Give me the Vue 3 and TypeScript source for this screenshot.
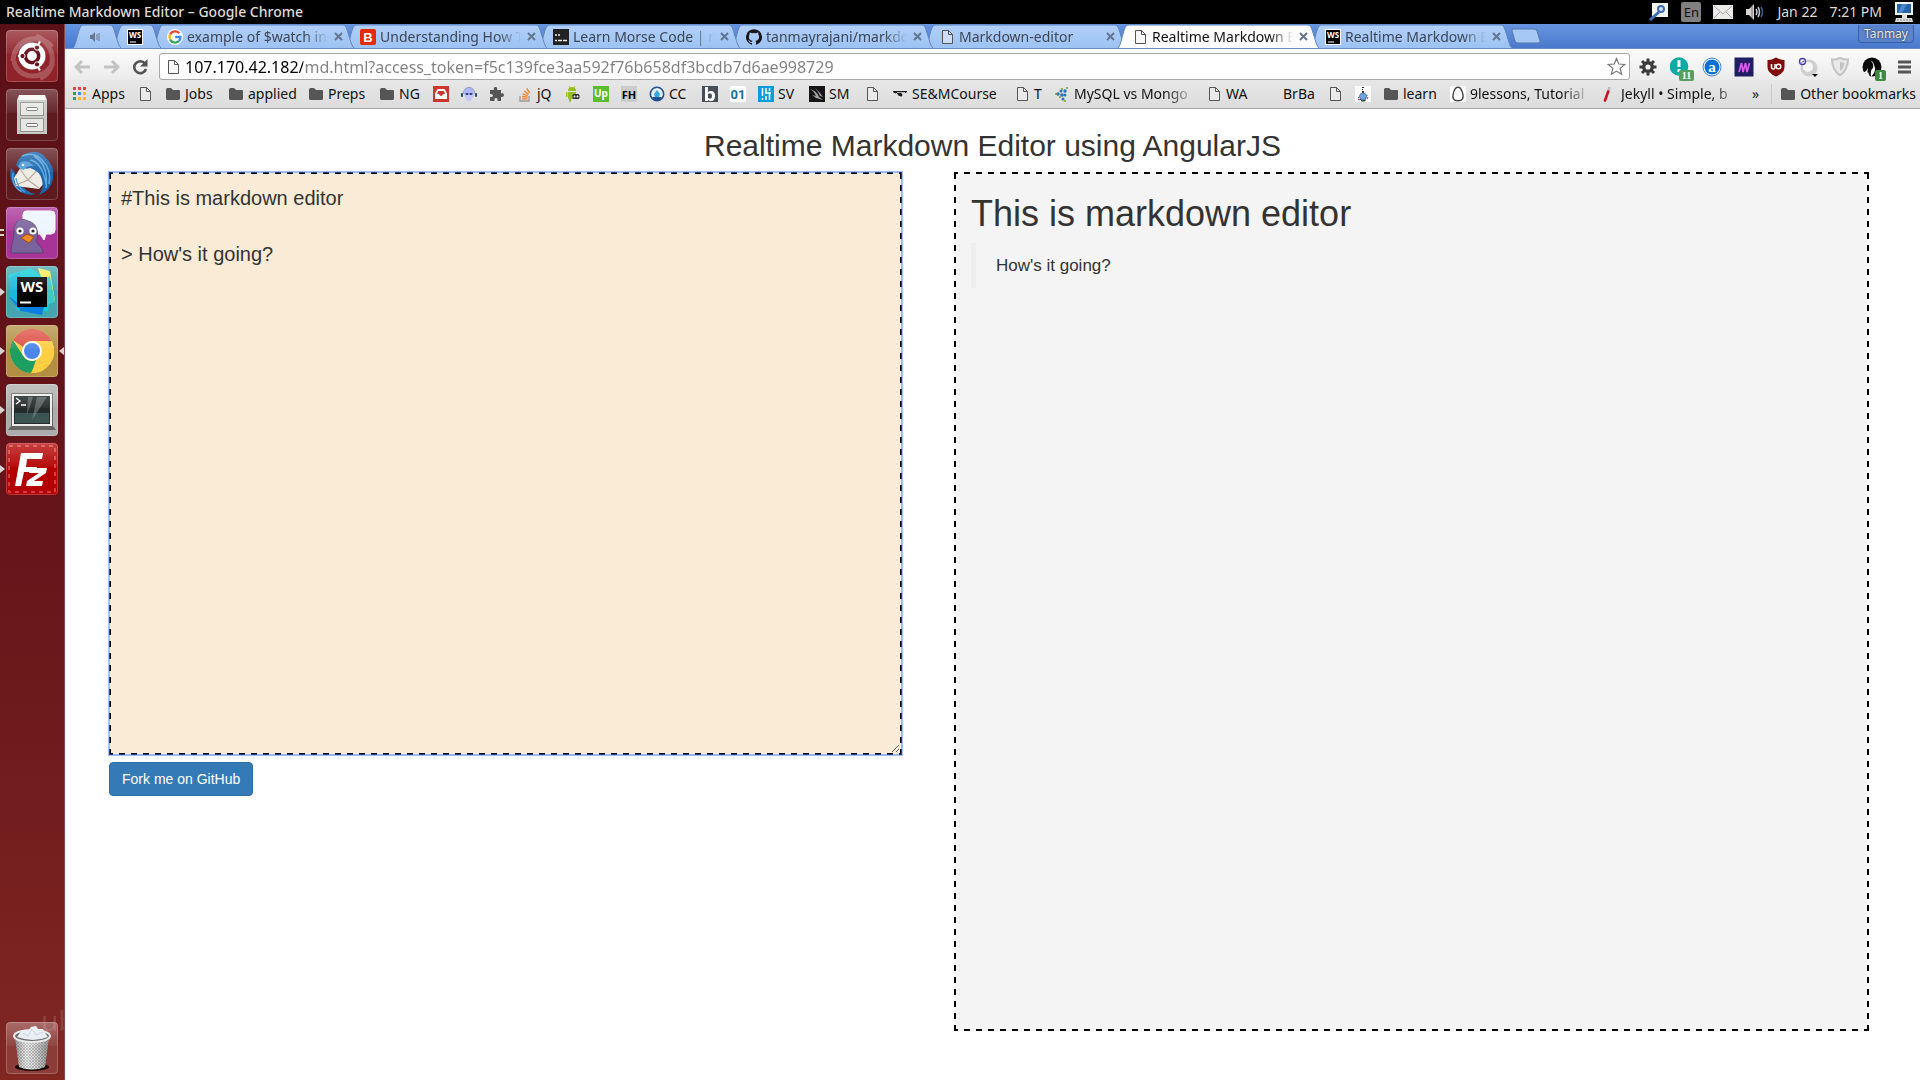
<script setup lang="ts">
import { computed, ref } from 'vue'

interface Tab {
  title: string
  icon: string
  pinned?: boolean
  active?: boolean
}
interface Bookmark {
  icon: string
  label?: string
  width?: number
  fade?: boolean
  name?: string
}
interface App {
  name: string
  icon: string
  tile: string
  running?: 'one' | 'two'
  focused?: boolean
}
interface Block {
  kind: 'h1' | 'quote' | 'p'
  text: string
}

const PINNED_WIDTH = 40
const TAB_WIDTH = 193

const tabs: Tab[] = [
  { title: 'Audio', icon: 'speaker', pinned: true },
  { title: 'WebStorm', icon: 'ws', pinned: true },
  { title: 'example of $watch in', icon: 'google' },
  { title: 'Understanding How T', icon: 'bRed' },
  { title: 'Learn Morse Code | m', icon: 'morse' },
  { title: 'tanmayrajani/markdo', icon: 'github' },
  { title: 'Markdown-editor', icon: 'page' },
  { title: 'Realtime Markdown E', icon: 'page', active: true },
  { title: 'Realtime Markdown E', icon: 'ws' },
]

const tabWidth = (t: Tab) => (t.pinned ? PINNED_WIDTH : TAB_WIDTH)
const tabLayer = (t: Tab, i: number) => (t.active ? tabs.length + 1 : tabs.length - i)
const tabPath = (t: Tab) => {
  const w = tabWidth(t) + 8
  return `M0 24C3 22 5 6 8 2Q9 1 11 1H${w - 11}Q${w - 9} 1 ${w - 8} 3C${w - 5} 10 ${w - 3} 22 ${w} 24`
}

const bookmarks: Bookmark[] = [
  { icon: 'apps', label: 'Apps', width: 33 },
  { icon: 'page', name: 'Page' },
  { icon: 'folder', label: 'Jobs', width: 31 },
  { icon: 'folder', label: 'applied', width: 48 },
  { icon: 'folder', label: 'Preps', width: 39 },
  { icon: 'folder', label: 'NG', width: 22 },
  { icon: 'inbox', name: 'Inbox' },
  { icon: 'alien', name: 'Music' },
  { icon: 'puzzle', name: 'Extensions' },
  { icon: 'stack', label: 'jQ', width: 16 },
  { icon: 'android', name: 'Android' },
  { icon: 'upwork', name: 'Upwork' },
  { icon: 'fh', name: 'FH' },
  { icon: 'cc', label: 'CC', width: 21 },
  { icon: 'bGrey', name: 'B' },
  { icon: 'zeroOne', name: '01' },
  { icon: 'sv', label: 'SV', width: 19 },
  { icon: 'sm', label: 'SM', width: 23 },
  { icon: 'page', name: 'Page' },
  { icon: 'se', label: 'SE&MCourse', width: 90 },
  { icon: 'page', label: 'T', width: 8 },
  { icon: 'mysql', label: 'MySQL vs Mongo', width: 120, fade: true },
  { icon: 'page', label: 'WA', width: 25 },
  { icon: 'blank', label: 'BrBa', width: 32 },
  { icon: 'page', name: 'Page' },
  { icon: 'flask', name: 'Flask' },
  { icon: 'folder', label: 'learn', width: 35 },
  { icon: 'egg', label: '9lessons, Tutorial', width: 119, fade: true },
  { icon: 'tube', label: 'Jekyll • Simple, b', width: 119, fade: true },
]

const extensions = [
  { name: 'Settings', icon: 'gear' },
  { name: 'Alerts', icon: 'alert', badge: '11' },
  { name: 'Alexa', icon: 'alexa' },
  { name: 'Momentum', icon: 'momentum' },
  { name: 'uBlock', icon: 'ublock' },
  { name: 'Search', icon: 'orb' },
  { name: 'Shield', icon: 'shield' },
  { name: 'Umbrella', icon: 'swan', badge: '1' },
]

const apps: App[] = [
  { name: 'Dash', icon: 'ubuntu', tile: 'dash' },
  { name: 'Files', icon: 'files', tile: 'glass' },
  { name: 'Thunderbird', icon: 'thunderbird', tile: 'glass' },
  { name: 'Pidgin', icon: 'pidgin', tile: 'purple', running: 'two' },
  { name: 'WebStorm', icon: 'webstorm', tile: 'teal', running: 'one' },
  { name: 'Google Chrome', icon: 'chrome', tile: 'gold', running: 'one', focused: true },
  { name: 'Terminal', icon: 'terminal', tile: 'silver', running: 'one' },
  { name: 'FileZilla', icon: 'filezilla', tile: 'red', running: 'one' },
]

const icons: Record<string, string> = {
  blank: '',
  speaker: '<g fill="#66778f"><path d="M3 6h2l3-3v10l-3-3H3z"/><path d="M10 5v6M12 4v8" stroke="#66778f" stroke-width="1"/></g>',
  ws: '<rect width="16" height="16" fill="#fff"/><rect x="1" y="1" width="14" height="14" fill="#000"/><text x="8" y="9" font-size="8" font-weight="700" fill="#fff" text-anchor="middle" font-family="Open Sans,sans-serif">WS</text><path d="M3 13h6" stroke="#fff"/>',
  google: '<circle cx="8" cy="8" r="8" fill="#fff"/><g fill="none" stroke-width="2.3"><path d="M12.2 4.2A5.6 5.6 0 0 0 3.1 5.4" stroke="#ea4335"/><path d="M3.1 5.4a5.6 5.6 0 0 0 0 5.2" stroke="#fbbc05"/><path d="M3.1 10.6a5.6 5.6 0 0 0 8.7 1.5" stroke="#34a853"/><path d="M11.8 12.1A5.5 5.5 0 0 0 13.5 8H8.2" stroke="#4285f4"/></g>',
  bRed: '<rect width="16" height="16" rx="2" fill="#e62b00"/><text x="8" y="13" font-size="13" font-weight="700" fill="#fff" text-anchor="middle" font-family="Liberation Sans,sans-serif">B</text>',
  morse: '<rect width="16" height="16" fill="#222"/><path d="M2 6h2M5 6h2M2 11.500h2M5 11.500h4M10 11.500h4" stroke="#eee" stroke-width="1.500"/>',
  github: '<path fill="#191717" d="M8 .2a8 8 0 0 0-2.500 15.600c.4.100.5-.2.5-.4v-1.500c-2.200.5-2.700-.9-2.700-.9-.4-.9-.9-1.200-.9-1.200-.7-.5.1-.5.1-.5.800.1 1.200.8 1.200.8.7 1.200 1.900.9 2.300.7.1-.5.300-.9.5-1.100-1.800-.2-3.600-.9-3.600-4 0-.9.300-1.600.8-2.200-.1-.2-.4-1 .1-2.100 0 0 .7-.2 2.200.8a7.500 7.500 0 0 1 4 0c1.500-1 2.200-.8 2.200-.8.4 1.100.2 1.900.1 2.100.5.6.8 1.300.8 2.200 0 3.100-1.900 3.800-3.700 4 .3.200.6.700.6 1.500v2.200c0 .2.100.5.500.4A8 8 0 0 0 8 .2"/>',
  page: '<path d="M3.500 1.500h6l4 4v9h-10z" fill="#f4f4f4" fill-opacity=".5" stroke="#555"/><path d="M9.500 1.500v4h4" fill="none" stroke="#555"/>',
  folder: '<path fill="#565656" d="M1 3.500Q1 2 2.500 2H6l2 2h6q1 0 1 1v7.500Q15 14 13.500 14h-11Q1 14 1 12.500z"/>',
  apps: '<path d="M1 1h3v3H1z" fill="#e8453c"/><path d="M6 1h3v3H6z" fill="#e8453c"/><path d="M11 1h3v3h-3z" fill="#e8453c"/><path d="M1 6h3v3H1z" fill="#2ba24c"/><path d="M6 6h3v3H6z" fill="#4688f1"/><path d="M11 6h3v3h-3zM6 11h3v3H6zM11 11h3v3h-3z" fill="#f9bb2d"/><path d="M1 11h3v3H1z" fill="#2ba24c"/>',
  inbox: '<rect width="16" height="16" fill="#c9382b"/><path fill="#fff" d="M4.500 3h7L14 7.500V13H2V7.500z"/><path fill="#c9382b" d="M5 5h6l1 3h-2q-.5 2-2 2T6 8H4z"/>',
  alien: '<ellipse cx="8" cy="7" rx="5" ry="6" fill="#aeb6ff"/><path d="M4 9h8l-2 6H6z" fill="#c4caff"/><path d="M2 8a6 6.500 0 0 1 12 0" fill="none" stroke="#8d99b5" stroke-width="1"/><rect y="7" width="2" height="4" rx="1" fill="#294866"/><rect x="14" y="7" width="2" height="4" rx="1" fill="#294866"/><ellipse cx="6" cy="8" rx="1.500" ry="1" fill="#26395c"/><ellipse cx="10" cy="8" rx="1.500" ry="1" fill="#26395c"/>',
  puzzle: '<path fill="#555" d="M1 4h4q-1-3 1.500-3T8 4h4v3.500q3-1 3 1.500t-3 2V15H8.500q.5-3-1.500-3t-1.500 3H1v-4q3 .5 3-1.500T1 8z"/>',
  stack: '<path d="M3 10v5h9v-5" fill="none" stroke="#9a9a9a" stroke-width="1.300"/><path d="M5 12.800h5.500M5.100 10.500l5.400.7M5.700 7.800l5.100 1.800M7.300 4.900l4.300 3.300M9.700 2.300l3 4.500" stroke="#f48024" stroke-width="1.300"/>',
  android: '<g fill="#97c024"><path d="M3 5a4 4 0 0 1 8 0zM3 6h8v7H3z"/><rect x="1" y="6" width="1.500" height="5" rx=".7"/><rect x="4" y="12" width="2" height="4" rx="1"/><path d="M4 0l1.500 2.500M10 0L8.500 2.500" stroke="#97c024" stroke-width=".8"/></g><rect x="7.500" y="8" width="7" height="5" rx="1.500" fill="#333"/><circle cx="9.500" cy="10.500" r="1" fill="#fff"/><circle cx="12.500" cy="10.500" r="1" fill="#fff"/>',
  upwork: '<rect width="16" height="16" fill="#5bbc2e"/><text x="8" y="11" font-size="10" font-weight="700" fill="#fff" text-anchor="middle" font-family="Noto Sans,sans-serif">Up</text>',
  fh: '<rect width="16" height="16" fill="#ccc"/><text x="8" y="12.500" font-size="11" font-weight="700" fill="#000" text-anchor="middle" font-family="Open Sans,sans-serif">FH</text>',
  cc: '<circle cx="8" cy="8" r="6.700" fill="#e6edf2" stroke="#23508e" stroke-width="1.600"/><path d="M8 4l3 4-1 3H6L5 8z" fill="#2ea9dd"/><path d="M3 11h10l-2 3H5z" fill="#23508e"/>',
  bGrey: '<rect width="16" height="16" fill="#464e5a"/><path fill="#fff" d="M3 1h3v5q1-1 3-1 4 0 4 5t-4 5q-2 0-3-1v1H3z"/><path d="M6 8q4-2 4 2t-4 2z" fill="#464e5a"/>',
  zeroOne: '<rect width="16" height="16" rx="2" fill="#fff"/><text x="8" y="13" font-size="13" font-weight="700" fill="#18709f" text-anchor="middle" font-family="Roboto,sans-serif" >01</text>',
  sv: '<rect width="16" height="16" fill="#0a9cde"/><path d="M4.500 2v8M4.500 12v2M8 2v6M8 10v4M11.500 2v3M11.500 7v7M8 7h5" stroke="#fff" stroke-width="1.500" fill="none"/>',
  sm: '<rect width="16" height="16" fill="#151515"/><path d="M1 3q7 2 9 8l4 3-7-2q-2-2-4-3l4 1Q5 5 1 3zM6 2q5 4 8 9l-3-1Q9 5 6 2z" fill="#a4a4a4"/>',
  se: '<path d="M1 5h14q0 2-3 2H9q2 1 1 3.500-4 0-5-3.500Q1 8 1 5z" fill="#1b1b1b"/><path d="M5 6.500h8" stroke="#ddd" stroke-width=".8"/>',
  mysql: '<g fill="#2a72b5"><circle cx="4" cy="8" r="1.700"/><circle cx="7" cy="5" r="1.500"/><circle cx="8" cy="9" r="1.800"/><circle cx="11" cy="5" r="1.700"/><circle cx="11" cy="9" r="1.500"/><circle cx="9" cy="13" r="1.500"/></g><g fill="#71a53b"><circle cx="2" cy="8" r="1"/><circle cx="13" cy="2" r="1"/><circle cx="8" cy="3" r="1"/><circle cx="6" cy="11" r="1"/><circle cx="11" cy="15" r="1"/></g>',
  flask: '<rect width="16" height="16" fill="#fafafa"/><path d="M7 1h2v1H7zM7 3h1v1H7zM7 5h2v2H7z" fill="#333"/><circle cx="8" cy="10.500" r="3.500" fill="#6ea6e2" stroke="#46699c" stroke-width=".8"/><path d="M3 13l2 1M12 13l1-2" stroke="#c22"/><path d="M3 11l1 1M6 15h4M12 9v1" stroke="#282"/><path d="M5 13l2 2 4-1" fill="none" stroke="#222" stroke-width=".8"/>',
  egg: '<rect width="16" height="16" fill="#fff"/><path d="M8 1.300c4 0 6 9 4.500 11.500-1.500 2.500-7.500 2.500-9 0C2 10.300 4 1.300 8 1.300z" fill="#fff" stroke="#444" stroke-width="1.400"/>',
  tube: '<path d="M8.500 1L7 6" stroke="#bbb" stroke-width="2.500"/><path d="M7.200 5.500L4 14.500" stroke="#c8151b" stroke-width="2.600" stroke-linecap="round"/>',
  gear: '<g fill="#3b3b3b"><circle cx="10" cy="10" r="6"/><path d="M8.500 1.500h3v17h-3zM1.500 8.500h17v3h-17z"/><path d="M8.500 1.500h3v17h-3zM1.500 8.500h17v3h-17z" transform="rotate(45 10 10)"/></g><circle cx="10" cy="10" r="2.600" fill="#f2f2f2"/>',
  alert: '<circle cx="9" cy="9.500" r="9.300" fill="#0eaaa6"/><path d="M9 3v7M9 12v3" stroke="#fff" stroke-width="3"/>',
  alexa: '<circle cx="10" cy="10" r="9" fill="#fff" stroke="#3c87d8"/><circle cx="10" cy="10" r="7.500" fill="#0b6fd6"/><text x="10" y="14.500" font-size="15" font-weight="700" fill="#fff" text-anchor="middle" font-family="Liberation Serif,serif">a</text>',
  momentum: '<rect x=".5" y=".5" width="19" height="19" fill="#211f63"/><path d="M5 15l2.500-9M9 15l2.500-9M13 15l2.500-9M7.500 6L9 15M11.500 6L13 15" fill="none" stroke="#d65cf0" stroke-width="1.700"/>',
  ublock: '<path d="M10 .5q5 3 8.500 2.500v7q0 6-8.500 9.500Q1.500 16 1.500 10V3Q5 3.500 10 .5z" fill="#800c0c"/><path d="M5.500 7v3q0 2 1.800 2T9 10V7" fill="none" stroke="#fff" stroke-width="1.500"/><circle cx="12.500" cy="9.500" r="2.300" fill="none" stroke="#fff" stroke-width="1.500"/>',
  orb: '<circle cx="11" cy="11" r="8.500" fill="#cfcfcf"/><circle cx="10" cy="10" r="5" fill="#f6f6f6"/><circle cx="4.500" cy="4.500" r="3" fill="#fff" stroke="#3f3f9e" stroke-width="1.400"/><path d="M3.500 5.500L6 4" stroke="#3f3f9e"/><path d="M14 17h6l-3 3z" fill="#111"/>',
  shield: '<path d="M10 1q5 2 8 1.500 0 10-8 16Q2 12.500 2 2.500 5 3 10 1z" fill="#e9e9e9" stroke="#c3c3c3" stroke-width="2"/><path d="M10 5v9q4-3 4.500-8z" fill="#c3c3c3"/>',
  swan: '<circle cx="10" cy="10" r="9.500" fill="#080808"/><path d="M9 4q3 3 2 7-3 2-2 9l3-4q2-4 0-8-1-4-3-4zM1 16q4-2 5-5l-1 6z" fill="#fff"/><path d="M1 19l5-4 2 5z" fill="#f2f2f2"/>',
  ubuntu: '<path d="M7 31C8 8 34 2 46 17M30 6C52 15 50 43 34 48M47 33C36 54 10 47 8 31" fill="none" stroke="#fff" stroke-opacity=".22" stroke-width="5"/><circle cx="26" cy="26" r="13.500" fill="#fff"/><circle cx="26" cy="26" r="6.700" fill="none" stroke="#651019" stroke-width="3.600"/><path d="M12 26h6M30 18.500l4-7M30 33.500l4 7" stroke="#fff" stroke-width="2"/><g fill="#651019" stroke="#fff" stroke-width="1"><circle cx="16.500" cy="26" r="2.600"/><circle cx="31" cy="17.600" r="2.600"/><circle cx="31" cy="34.400" r="2.600"/></g>',
  files: '<path d="M13 6h26l2 5v34H11V11z" fill="#c9c9c5"/><path d="M13 6h26l1 5H12z" fill="#f4f4f2"/><g fill="#e6e6e3" stroke="#92928d"><rect x="14.500" y="13.500" width="23" height="13"/><rect x="14.500" y="29.500" width="23" height="13"/></g><g fill="#fff" stroke="#777"><rect x="20.500" y="18.500" width="11" height="3" rx="1"/><rect x="20.500" y="34.500" width="11" height="3" rx="1"/></g>',
  thunderbird: '<path d="M5 20Q1 36 17 45q6 3 13 1-12-2-15-12L9 25z" fill="#2469a9"/><path d="M8 30L15 19l19-3 6 17-7 8-23-3z" fill="#efece5"/><path d="M14 21l8 11 12-13M10 37l12-5 11 8" fill="none" stroke="#b5ae9e" stroke-width="1.200"/><path d="M10 17Q14 5 26 4q8-1 13 5 10 8 8 22-2 11-14 16 5-7 3-15-2-9-12-12-5 2-7-1-4 2-7-2z" fill="#1c65ac"/><path d="M16 8q12-5 20 4 10 10 7 24M24 12q12 2 16 24M28 8q15 9 12 32" fill="none" stroke="#5ba6de" stroke-width="1.600"/><path d="M12 19q2-8 11-5 3 3 7 4-9-1-12 4-3 0-6-3z" fill="#4e9bd8"/><circle cx="17" cy="17" r="1.300" fill="#e8f2fb"/><path d="M7 25q-2 13 9 19M10 30q1 9 9 14" fill="none" stroke="#5ba6de" stroke-width="1.300"/>',
  pidgin: '<path d="M20 4h25q4 0 4 4v15q0 4-4 4h-5l-2 6-4-6H20q-3 0-3-4V8q0-4 3-4z" fill="#edf4fd" stroke="#fff"/><path d="M5 46c0-9 3-12 3-22C8 14 15 10 22 14c10 2 11 14 8 20 2 4 7 7 7 12z" fill="#7a629c" stroke="#594579"/><circle cx="14" cy="24" r="3.600" fill="#fff"/><circle cx="27" cy="24" r="3.600" fill="#fff"/><circle cx="14" cy="24" r="1.600" fill="#251f2b"/><circle cx="27" cy="24" r="1.600" fill="#251f2b"/><path d="M15 31l6-4 7 3-5 6z" fill="#f18b27" stroke="#9c4d14"/>',
  webstorm: '<path d="M2 9L24 2l23 16-5 27-31-1z" fill="#10cdd9"/><path d="M32 2l12 3 5 30-9-9z" fill="#f1ee55"/><path d="M36 14l8-4 5 26-9 3z" fill="#3fc9c4"/><path d="M3 31l35 10-2 8-21-4z" fill="#087ee1"/><path d="M4 12l10-6 3 36L4 31z" fill="#18b9dd"/><rect x="11" y="11" width="30" height="30" fill="#000"/><text x="26" y="26" font-size="15" font-weight="700" fill="#fff" text-anchor="middle" font-family="Open Sans,sans-serif">WS</text><path d="M14 36.500h11" stroke="#fff" stroke-width="2"/>',
  chrome: '<circle cx="26" cy="26" r="22" fill="#fc4"/><path d="M6.900 15A22 22 0 0 1 45.700 16H26a10 10 0 0 0-9 6z" fill="#dd5145"/><path d="M6.900 15l10.400 16a10 10 0 0 0 12.700 4l-4.500 13A22 22 0 0 1 6.900 15z" fill="#1e9e60"/><path d="M45.700 16A22 22 0 0 1 25 48l9.700-17A10 10 0 0 0 33 19l-7-3z" fill="#ffce43"/><circle cx="26" cy="26" r="10" fill="#fff"/><circle cx="26" cy="26" r="8" fill="#4a86ea"/>',
  terminal: '<path d="M5 9h42v33l3 4H2l3-4z" fill="#666"/><rect x="6" y="10" width="40" height="32" fill="#ececea"/><rect x="8" y="12" width="36" height="28" fill="#242b2a"/><path d="M9 29h34v10H9z" fill="#3c5452"/><path d="M22 13h5l-6 18zM31 13h10L26 36z" fill="#889390" opacity=".5"/><path d="M10 14l4 3-4 3M15 21h5" fill="none" stroke="#fff" stroke-width="1.300"/>',
  filezilla: '<rect x="3" y="3" width="46" height="46" fill="#b30000" stroke="#d23d3d" stroke-width="2" stroke-dasharray="4 4"/><path d="M15 10h22l-1 6H21l-1 8h11l-1 5H18l-3 14H9zM24 25h17l-1 5-12 8h9l-1 5H20l1-5 12-8H23z" fill="#fff"/>',
  trash: '<ellipse cx="26" cy="45" rx="17" ry="4" fill="#1c0707"/><path d="M9 14h34l-4 31q-13 5-26 0z" fill="url(#mesh)"/><path d="M9 14h34l-4 31q-13 5-26 0z" fill="url(#shade)"/><ellipse cx="26" cy="14" rx="18" ry="6" fill="#555" stroke="#e8e8e8" stroke-width="2"/><path d="M11 15l5-7 6 1 3-4 5-1 2 3h5l2 4 3 4q-15 6-31 0z" fill="#e6ebf4"/><path d="M17 11l5 3 4-7 4 6 7-3" fill="none" stroke="#c5cddd"/>',
}

const markdown = ref("#This is markdown editor\n\n> How's it going?")
const url = ref('107.170.42.182/md.html?access_token=f5c139fce3aa592f76b658df3bcdb7d6ae998729')

const blocks = computed<Block[]>(() =>
  markdown.value
    .split('\n')
    .filter((line) => line.trim() !== '')
    .map((line) => {
      if (line.startsWith('#')) return { kind: 'h1', text: line.replace(/^#\s*/, '') }
      if (line.startsWith('>')) return { kind: 'quote', text: line.replace(/^>\s*/, '') }
      return { kind: 'p', text: line }
    }),
)
</script>

<template>
  <div class="desktop">
    <svg class="defs" aria-hidden="true">
      <defs>
        <pattern id="mesh" width="3" height="3" patternUnits="userSpaceOnUse">
          <rect width="3" height="3" fill="#e2e2e2" />
          <path d="M0 0l3 3M3 0L0 3" stroke="#8c8c8c" stroke-width=".7" />
        </pattern>
        <linearGradient id="shade">
          <stop offset="0" stop-color="#444" stop-opacity=".5" />
          <stop offset=".35" stop-color="#fff" stop-opacity=".3" />
          <stop offset="1" stop-color="#444" stop-opacity=".5" />
        </linearGradient>
        <linearGradient id="tabFill" x2="0" y2="1">
          <stop offset="0" stop-color="#b1cff8" />
          <stop offset="1" stop-color="#9dc3f3" />
        </linearGradient>
      </defs>
    </svg>

    <header class="panel">
      <span class="window-title">Realtime Markdown Editor – Google Chrome</span>
      <div class="indicators">
        <svg width="20" height="18" viewBox="0 0 20 18">
          <path d="M3 0h16v14H3z" fill="#f1f1ee" />
          <path d="M1 17l9-8" stroke="#3c6fb4" stroke-width="3" />
          <circle cx="12" cy="6" r="3" fill="#cfe0f5" stroke="#3c6fb4" stroke-width="2" />
        </svg>
        <span class="lang">En</span>
        <svg width="20" height="14" viewBox="0 0 20 14">
          <path d="M0 0h20v14H0z" fill="#ecebe8" />
          <path d="M1 1l9 8 9-8M1 13l6-6M19 13l-6-6" fill="none" stroke="#a8a6a2" />
        </svg>
        <svg width="20" height="18" viewBox="0 0 20 18">
          <path d="M1 6h3l5-5v16l-5-5H1z" fill="#d6d4d0" />
          <path d="M7 3v12" stroke="#77736e" />
          <path d="M11 6q2 3 0 6M13 4q3 5 0 10" fill="none" stroke="#c3c9d2" stroke-width="1.500" />
          <path d="M16 4q3 5 0 10" fill="none" stroke="#39608f" stroke-width="1.500" />
        </svg>
        <time class="clock"><span>Jan 22</span><span>7:21 PM</span></time>
        <svg width="20" height="22" viewBox="0 0 20 22">
          <path d="M1 1h18v13H1z" fill="#f2f2f0" />
          <path d="M3 3h14v9H3z" fill="#2663ac" />
          <path d="M8 3h5l-5 9H4z" fill="#4c87cc" />
          <path d="M8 14h5v3H8zM2 17h16l1 4H1z" fill="#dcdcd8" />
          <path d="M3 19h14" stroke="#888" stroke-dasharray="2 1" />
        </svg>
      </div>
    </header>

    <div class="workspace">
      <nav class="launcher" aria-label="Launcher">
        <div v-for="app in apps" :key="app.name" class="slot">
          <span v-if="app.running === 'one'" class="arrow"></span>
          <span v-if="app.running === 'two'" class="pips"></span>
          <button class="tile" :class="app.tile" :aria-label="app.name">
            <svg viewBox="0 0 52 52" v-html="icons[app.icon]"></svg>
          </button>
          <span v-if="app.focused" class="arrow focus"></span>
        </div>
        <div class="slot last">
          <span class="ghost" aria-hidden="true">ub</span>
          <button class="tile trash" aria-label="Trash">
            <svg viewBox="0 0 52 52" v-html="icons.trash"></svg>
          </button>
        </div>
      </nav>

      <div class="browser">
        <div class="tabstrip">
          <div
            v-for="(tab, i) in tabs"
            :key="i"
            class="tab"
            :class="{ active: tab.active, pinned: tab.pinned }"
            :style="{ width: tabWidth(tab) + 'px', zIndex: tabLayer(tab, i) }"
          >
            <svg class="tab-shape" :width="tabWidth(tab) + 8" height="25">
              <path :d="tabPath(tab)" :fill="tab.active ? '#fdfdfd' : 'url(#tabFill)'" stroke="#5f86bd" />
            </svg>
            <svg class="icon" viewBox="0 0 16 16" v-html="icons[tab.icon]"></svg>
            <template v-if="!tab.pinned">
              <span class="tab-title">{{ tab.title }}</span>
              <button class="close" aria-label="Close tab">
                <svg width="9" height="9" viewBox="0 0 9 9"><path d="M1 1l7 7M8 1L1 8" /></svg>
              </button>
            </template>
          </div>
          <button class="new-tab" aria-label="New tab">
            <svg width="32" height="17" viewBox="0 0 32 17">
              <path d="M4 1h20q2 0 3 2l3 10q1 2-2 2H8q-2 0-3-2L2 3q-1-2 2-2z" fill="#a6c8f5" stroke="#5577ae" />
            </svg>
          </button>
          <button class="profile">Tanmay</button>
        </div>

        <div class="toolbar">
          <div class="history">
            <button aria-label="Back">
              <svg width="17" height="16" viewBox="0 0 17 16"><path d="M16 8H3M8 2L2 8l6 6" class="dim" /></svg>
            </button>
            <button aria-label="Forward">
              <svg width="17" height="16" viewBox="0 0 17 16"><path d="M1 8h13M9 2l6 6-6 6" class="dim" /></svg>
            </button>
            <button aria-label="Reload">
              <svg width="17" height="16" viewBox="0 0 17 16">
                <path d="M13 4.500A6 6 0 1 0 14 10" fill="none" stroke="#555" stroke-width="2.600" />
                <path d="M15.500 0v7.500H8z" fill="#555" />
              </svg>
            </button>
          </div>
          <div class="omnibox">
            <svg class="icon" viewBox="0 0 16 16" v-html="icons.page"></svg>
            <input v-model="url" class="url" type="text" aria-label="Address" spellcheck="false" />
            <button class="star" aria-label="Bookmark this page">
              <svg width="19" height="19" viewBox="0 0 19 19">
                <path d="M9.500 1.500l2.300 5.500 5.900.5-4.500 3.900 1.400 5.800-5.100-3.100-5.100 3.100 1.400-5.800L1.300 7.500 7.200 7z" fill="#fff" stroke="#777" stroke-width="1.200" />
              </svg>
            </button>
          </div>
          <div class="extensions">
            <button v-for="ext in extensions" :key="ext.name" class="ext" :aria-label="ext.name">
              <svg width="20" height="20" viewBox="0 0 20 20" v-html="icons[ext.icon]"></svg>
              <span v-if="ext.badge" class="badge" :class="{ wide: ext.badge.length > 1 }">{{ ext.badge }}</span>
            </button>
            <button class="ext" aria-label="Menu">
              <svg width="20" height="20" viewBox="0 0 20 20">
                <path d="M4 5h13M4 10h13M4 15h13" stroke="#555" stroke-width="3" />
              </svg>
            </button>
          </div>
        </div>

        <nav class="bookmarks" aria-label="Bookmarks">
          <a v-for="(b, i) in bookmarks" :key="i" class="bookmark" href="#" :aria-label="b.label ?? b.name">
            <svg class="icon" viewBox="0 0 16 16" v-html="icons[b.icon]"></svg>
            <span v-if="b.label" class="label" :class="{ fade: b.fade }" :style="{ width: b.width + 'px' }">{{ b.label }}</span>
          </a>
          <button class="more" aria-label="More bookmarks">»</button>
          <a class="bookmark other" href="#">
            <svg class="icon" viewBox="0 0 16 16" v-html="icons.folder"></svg>
            <span class="label">Other bookmarks</span>
          </a>
        </nav>

        <main class="page">
          <h3 class="heading">Realtime Markdown Editor using AngularJS</h3>
          <div class="columns">
            <section class="edit">
              <textarea v-model="markdown" class="source dashed" aria-label="Markdown source" spellcheck="false"></textarea>
              <button class="fork">Fork me on GitHub</button>
            </section>
            <section class="preview dashed">
              <template v-for="(block, i) in blocks" :key="i">
                <h1 v-if="block.kind === 'h1'">{{ block.text }}</h1>
                <blockquote v-else-if="block.kind === 'quote'">{{ block.text }}</blockquote>
                <p v-else>{{ block.text }}</p>
              </template>
            </section>
          </div>
        </main>
      </div>
    </div>
  </div>
</template>

<style>
body {
  margin: 0;
  background: #fff;
}
</style>

<style scoped>
.desktop,
.desktop * {
  box-sizing: border-box;
}
.desktop {
  display: flex;
  flex-direction: column;
  min-height: 100vh;
  font: 14px/20px 'Noto Sans', 'Open Sans', sans-serif;
  color: #222;
}
button {
  padding: 0;
  border: 0;
  background: none;
  font: inherit;
  color: inherit;
}
svg {
  display: block;
  flex: none;
}
.defs {
  position: absolute;
  width: 0;
  height: 0;
}
.icon {
  width: 16px;
  height: 16px;
}

.panel {
  display: flex;
  align-items: center;
  justify-content: space-between;
  height: 24px;
  padding: 0 6px;
  background: #000;
  color: #dfdbd2;
}
.window-title {
  font-weight: 500;
}
.indicators {
  display: flex;
  align-items: center;
  gap: 12px;
}
.lang {
  width: 20px;
  border-radius: 2px;
  background: #808080;
  color: #111;
  font-size: 13px;
  text-align: center;
}
.clock {
  display: flex;
  gap: 12px;
}

.workspace {
  display: flex;
  flex: 1;
}
.launcher {
  display: flex;
  flex-direction: column;
  gap: 7px;
  width: 65px;
  flex: none;
  padding: 6px 0;
  border-right: 1px solid #8a4a4c;
  background: linear-gradient(#5a1017, #66151a 50%, #802722);
}
.slot {
  position: relative;
  padding-left: 6px;
}
.slot.last {
  margin-top: auto;
}
.tile {
  position: relative;
  display: block;
  width: 52px;
  height: 52px;
  border-radius: 4px;
  overflow: hidden;
}
.tile::after {
  content: '';
  position: absolute;
  inset: 0;
  border-radius: 4px;
  box-shadow: inset 0 0 0 1px rgba(255, 255, 255, 0.2);
  background: linear-gradient(rgba(255, 255, 255, 0.25), rgba(255, 255, 255, 0.05) 45%, transparent 46%);
}
.dash {
  background: #8f2329;
}
.glass {
  background: #5d1b20;
}
.purple {
  background: #a83497;
}
.teal {
  background: #45a5ae;
}
.gold {
  background: #b28f42;
}
.silver {
  background: #acacaa;
}
.red {
  background: #b30000;
}
.trash {
  background: rgba(255, 255, 255, 0.1);
}
.arrow {
  position: absolute;
  top: 22px;
  left: 0;
  border: 4px solid transparent;
  border-left: 5px solid #d9d0d0;
  border-right: 0;
}
.arrow.focus {
  right: 0;
  left: auto;
  border-right: 5px solid #d9d0d0;
  border-left: 0;
}
.pips {
  position: absolute;
  top: 22px;
  left: 0;
  width: 4px;
  height: 7px;
  border: solid #d9d0d0;
  border-width: 2px 0;
}
.ghost {
  position: absolute;
  top: -18px;
  left: 41px;
  width: 23px;
  overflow: hidden;
  color: rgba(255, 255, 255, 0.14);
  font-size: 28px;
  line-height: 32px;
}

.browser {
  display: flex;
  flex-direction: column;
  flex: 1;
  min-width: 0;
}
.tabstrip {
  display: flex;
  height: 25px;
  padding-left: 8px;
  border-bottom: 1px solid #6c8cb9;
  background: linear-gradient(#6795e0, #4a79cc);
}
.tab {
  position: relative;
  display: flex;
  align-items: center;
  gap: 4px;
  flex: none;
  height: 25px;
  padding-left: 14px;
  color: #3d4656;
}
.tab > * {
  position: relative;
}
.tab .tab-shape {
  position: absolute;
  top: 0;
  left: 0;
}
.tab.active {
  color: #111;
}
.tab-title {
  width: 141px;
  overflow: hidden;
  white-space: nowrap;
  mask-image: linear-gradient(90deg, #000 118px, transparent 141px);
}
.close {
  padding: 2px;
}
.close path {
  fill: none;
  stroke: #64768f;
  stroke-width: 2;
}
.new-tab {
  align-self: center;
  margin-left: 6px;
}
.profile {
  align-self: flex-start;
  width: 56px;
  height: 18px;
  margin: 1px 6px 0 auto;
  border: 1px solid #3961a5;
  border-top: 0;
  border-radius: 0 0 4px 4px;
  background: #5a83cc;
  color: #e8e8e8;
  font: 12px/17px 'Noto Sans', sans-serif;
  text-shadow: 0 0 2px #222;
}

.toolbar {
  display: flex;
  align-items: center;
  height: 31px;
  padding: 4px 6px 0 9px;
  background: linear-gradient(#fcfcfc, #ebebeb);
}
.history {
  display: flex;
  gap: 12px;
  margin-right: 10px;
}
.dim {
  fill: none;
  stroke: #c3c3c3;
  stroke-width: 3;
}
.omnibox {
  display: flex;
  align-items: center;
  flex: 1;
  height: 27px;
  padding: 0 3px 0 5px;
  margin-right: 8px;
  border: 1px solid #a9a9a9;
  border-radius: 3px;
  background: #fff;
}
.url {
  flex: 1;
  min-width: 0;
  height: 24px;
  margin-left: 4px;
  padding: 0;
  border: 0;
  outline: 0;
  background: linear-gradient(90deg, #000 118px, #808080 118px);
  background-clip: text;
  color: transparent;
  font: 16px/24px 'Noto Sans', sans-serif;
}
.extensions {
  display: flex;
  gap: 12px;
}
.ext {
  position: relative;
}
.badge {
  position: absolute;
  right: -4px;
  bottom: -4px;
  width: 11px;
  height: 11px;
  border-radius: 2px;
  background: #3a8a3f;
  color: #fff;
  font: bold 10px/11px 'Liberation Serif', serif;
  text-align: center;
}
.badge.wide {
  width: 15px;
  background: #56a05d;
}

.bookmarks {
  display: flex;
  align-items: center;
  gap: 12px;
  height: 29px;
  padding: 0 11px 0 7px;
  border-bottom: 1px solid #a5a5a5;
  background: linear-gradient(#e7e7e7, #dcdcdc);
}
.bookmark {
  display: flex;
  align-items: center;
  gap: 4px;
  flex: none;
  color: #111;
  text-decoration: none;
}
.label {
  white-space: nowrap;
}
.label.fade {
  overflow: hidden;
  mask-image: linear-gradient(90deg, #000 92px, transparent 121px);
}
.more {
  margin-left: auto;
}
.other {
  padding-left: 8px;
  border-left: 1px solid #c8ccd2;
}

.page {
  display: flex;
  flex-direction: column;
  flex: 1;
  padding: 20px 51px 49px 44px;
  background: #fff;
  color: #333;
  font-family: 'Liberation Sans', Arial, sans-serif;
}
.heading {
  margin: 0 -51px 10px -44px;
  font-size: 30px;
  font-weight: 400;
  line-height: 33px;
  text-align: center;
}
.columns {
  display: grid;
  grid-template-columns: 793fr 915fr;
  gap: 52px;
  flex: 1;
}
/* Long dashes: six pixels on, six off, along each edge of the box. */
.dashed {
  --across: repeating-linear-gradient(90deg, #000 0 6px, transparent 6px 12px);
  --down: repeating-linear-gradient(#000 0 6px, transparent 6px 12px);
  border: 2px solid transparent;
  background-color: var(--paper);
  background-image: var(--across), var(--across), var(--down), var(--down);
  background-position: -2px 0, -2px 100%, 0 1px, 100% 1px;
  background-size: calc(100% + 12px) 2px, calc(100% + 12px) 2px, 2px calc(100% + 12px), 2px calc(100% + 12px);
  background-repeat: no-repeat;
  background-origin: border-box;
  background-clip: border-box;
}
.source {
  --paper: #faebd7;
  display: block;
  width: 100%;
  height: 54vh;
  padding: 10px;
  outline: 2px solid rgba(72, 128, 236, 0.5);
  outline-offset: -1px;
  border-radius: 0;
  color: #333;
  font: 20px/28px 'Liberation Sans', Arial, sans-serif;
  resize: both;
}
.fork {
  height: 34px;
  margin-top: 7px;
  padding: 0 12px;
  border: 1px solid #2e6da4;
  border-radius: 4px;
  background: #337ab7;
  color: #fff;
  font-size: 14px;
}
.preview {
  --paper: #f4f4f4;
  padding: 20px 15px;
}
.preview h1 {
  margin: 0 0 10px;
  font-size: 36px;
  font-weight: 400;
  line-height: 39px;
}
.preview blockquote {
  margin: 0 0 20px;
  padding: 10px 20px;
  border-left: 5px solid #eee;
  font-size: 17px;
  line-height: 25px;
}
</style>
